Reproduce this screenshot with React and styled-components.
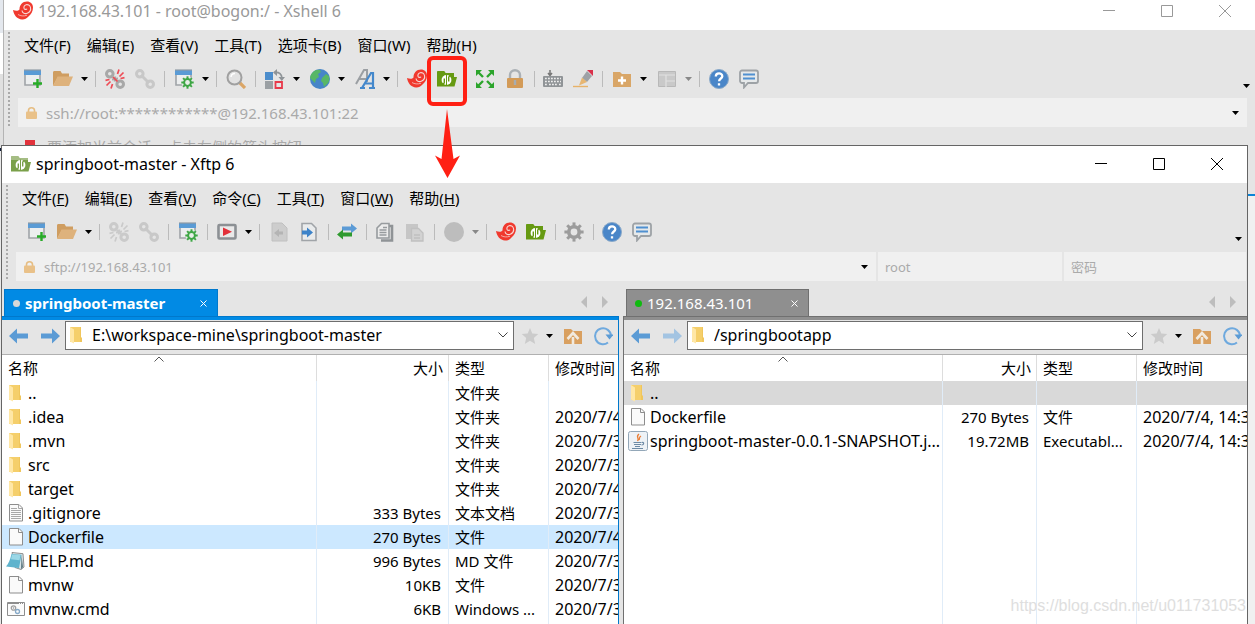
import React from "react";
import styled, { createGlobalStyle, css } from "styled-components";

const GlobalStyle = createGlobalStyle`
  * { box-sizing: border-box; }
  body {
    margin: 0;
    background: #e5e5e5;
    color: #000;
    font: 15px/20px "Noto Sans", "Noto Sans CJK SC", sans-serif;
  }
  button, input {
    margin: 0;
    padding: 0;
    border: 0;
    background: none;
    color: inherit;
    font: inherit;
  }
  svg { display: block; flex: none; }
`;

/* ---------- desktop and windows ---------- */

const Desktop = styled.div`
  position: relative;
  display: flex;
  min-height: 100vh;
  overflow: hidden;
`;

const EdgeLeft = styled.div`
  flex: none;
  width: 3px;
  background: linear-gradient(#e4e8ee 0 33px, #fff 33px 74px, #e0e0e0 74px 148px, #101c38 148px 151px, #e9e9e9 151px);
`;

const EdgeRight = styled.div`
  position: absolute;
  top: 194px;
  right: 0;
  bottom: 0;
  width: 7px;
  border-top: 2px solid #0a84d8;
  background: #f0f0f0;
`;

const ShellWindow = styled.section`
  flex: 1;
  min-width: 0;
  border-left: 1px solid #b4b4b4;
  background: #e5e5e5;
`;

const FtpWindow = styled.section`
  position: absolute;
  top: 145px;
  right: 7px;
  bottom: 0;
  left: 1px;
  display: flex;
  flex-direction: column;
  border: 1px solid #656565;
  border-bottom: 0;
  background: #e5e5e5;
`;

const TitleBar = styled.header`
  display: flex;
  flex: none;
  align-items: center;
  gap: 5px;
  height: ${(p) => (p.$inactive ? 30 : 37)}px;
  padding: ${(p) => (p.$inactive ? "0 1px 8px 9px" : "0 1px 2px 9px")};
  background: #fff;
  color: ${(p) => (p.$inactive ? "#999" : "#000")};
`;

const Title = styled.h1`
  flex: 1;
  margin: 0;
  font-size: 16px;
  font-weight: 400;
  white-space: nowrap;
`;

const WindowButtons = styled.div`
  display: flex;
`;

const WindowButton = styled.button`
  display: flex;
  justify-content: center;
  width: 58px;
`;

/* ---------- menus and toolbars ---------- */

const Bars = styled.div`
  display: flex;
  flex: none;
  flex-direction: column;
  padding-left: 14px;
  position: relative;

  &::before {
    content: "";
    position: absolute;
    top: 2px;
    bottom: 0;
    left: 4px;
    width: 2px;
    background: repeating-linear-gradient(#aaa 0 2px, transparent 2px 4px);
  }
`;

const MenuBar = styled.nav`
  display: flex;
  gap: 16px;
  height: 32px;
  align-items: center;
  padding: 0 0 2px 6px;
`;

const MenuItem = styled.button`
  white-space: nowrap;
`;

const Toolbar = styled.div`
  display: flex;
  align-items: center;
  height: 34px;
  padding-left: ${(p) => p.$inset || 0}px;
`;

const ToolButton = styled.button`
  display: flex;
  flex: none;
  align-items: center;
  justify-content: center;
  width: 30px;
  height: 30px;
`;

const CaretButton = styled.button`
  display: flex;
  flex: none;
  align-items: center;
  justify-content: center;
  width: 13px;
  height: 30px;
  color: ${(p) => (p.$dim ? "#888" : "#000")};

  & + ${ToolButton} { margin-left: 2px; }
`;

const Overflow = styled(CaretButton)`
  align-self: flex-end;
  height: 20px;
  margin: 0 2px 0 auto;
`;

const Separator = styled.span`
  flex: none;
  width: ${(p) => (p.$slim ? 8 : 9)}px;
  height: 16px;
  background: linear-gradient(#bbb, #bbb) 4px 0 / 1px 100% no-repeat;
`;

const AddressRow = styled.div`
  display: flex;
  gap: 2px;
  margin-top: ${(p) => p.$top}px;
  padding-right: ${(p) => p.$right || 0}px;
`;

const AddressField = styled.label`
  display: flex;
  flex: ${(p) => (p.$width ? "none" : "1")};
  align-items: center;
  gap: 9px;
  min-width: 0;
  width: ${(p) => (p.$width ? `${p.$width}px` : "auto")};
  height: 29px;
  padding: 0 5px 0 ${(p) => (p.$width ? 7 : 8)}px;
  background: #f0f0f0;
  color: #aaa;
  font-size: ${(p) => (p.$small ? 13 : 15)}px;
`;

const AddressInput = styled.input`
  flex: 1;
  min-width: 0;
  width: 0;
  height: 24px;
  outline: none;

  &::placeholder { color: #aaa; opacity: 1; }
`;

const Hint = styled.p`
  display: flex;
  align-items: center;
  gap: 10px;
  margin: 0;
  padding: 10px 0 0 21px;
  color: #aaa;
`;

/* ---------- file panels ---------- */

const Panels = styled.main`
  display: grid;
  flex: 1;
  grid-template-columns: minmax(0, 617fr) minmax(0, 624fr);
  gap: 4px;
  min-height: 0;
`;

const Panel = styled.section`
  display: flex;
  flex-direction: column;
  min-height: 0;
`;

const TabStrip = styled.div`
  display: flex;
  flex: none;
  align-items: flex-end;
  height: 35px;
  padding-left: ${(p) => (p.$active ? 2 : 3)}px;
`;

const Tab = styled.div`
  display: flex;
  align-items: center;
  gap: 5px;
  width: ${(p) => (p.$active ? 214 : 183)}px;
  height: 27px;
  padding: 0 4px 0 8px;
  border: 1px solid ${(p) => (p.$active ? "#0078cc" : "#707070")};
  border-bottom: 0;
  background: ${(p) => (p.$active ? "#018ae4" : "#8f8f8f")};
  color: #fff;
  font-weight: ${(p) => (p.$active ? 700 : 400)};
`;

const Dot = styled.span`
  width: 7px;
  height: 7px;
  border-radius: 50%;
  background: ${(p) => (p.$active ? "#d8d8d8" : "#0fbb0f")};
`;

const TabLabel = styled.span`
  flex: 1;
  white-space: nowrap;
`;

const TabArrows = styled.div`
  display: flex;
  align-items: center;
  gap: 1px;
  height: 28px;
  margin-left: auto;
  padding-right: 4px;
`;

const ArrowButton = styled.button`
  display: flex;
  justify-content: center;
  width: 20px;
`;

const PanelBody = styled.div`
  display: flex;
  flex: 1;
  flex-direction: column;
  min-height: 0;
  border-top: 1px solid ${(p) => (p.$active ? "#0078cc" : "#707070")};
  ${(p) =>
    p.$active
      ? css`border-right: 1px solid #0078cc;`
      : css`border-left: 1px solid #707070;`}

  &::before {
    content: "";
    flex: none;
    height: 3px;
    background: ${(p) => (p.$active ? "#018ae4" : "#8f8f8f")};
  }
`;

const PathBar = styled.div`
  display: flex;
  flex: none;
  align-items: center;
  height: 35px;
  padding: 0 0 3px 1px;
  border-bottom: 1px solid #b0b0b0;
`;

const NavButton = styled(ToolButton)`
  width: 31px;
`;

const PathField = styled.label`
  display: flex;
  flex: 1;
  align-items: center;
  gap: 5px;
  min-width: 0;
  height: 29px;
  margin-right: 1px;
  padding: 0 5px 2px 1px;
  border: 1px solid #6e6e6e;
  background: #fff;
  font-size: 16px;
`;

const StarCaret = styled(CaretButton)`
  width: 8px;

  & + ${ToolButton} { margin-left: 5px; }
`;

const List = styled.div`
  flex: 1;
  min-height: 0;
  overflow: hidden;
  background: #fff;
`;

const FileTable = styled.table`
  width: 100%;
  height: 100%;
  table-layout: fixed;
  border-collapse: separate;
  border-spacing: 0;
`;

const Heading = styled.th`
  position: relative;
  height: 26px;
  padding: 0 5px 0 6px;
  border-right: 1px solid #ddd;
  font-weight: 400;
  text-align: ${(p) => (p.$right ? "right" : "left")};
  white-space: nowrap;
  overflow: hidden;

  &:last-child { border-right: 0; padding-right: 0; }
`;

const SortMark = styled.span`
  position: absolute;
  top: 1px;
  left: 50%;
  margin-left: -5px;
`;

const Row = styled.tr`
  background: ${(p) => p.$tone || "transparent"};
`;

const Cell = styled.td`
  height: ${(p) => (p.$fill ? "auto" : "24px")};
  padding: 0 7px 0 6px;
  border-right: 1px solid #e0ecf8;
  font-size: ${(p) => (p.$large ? 16 : 15)}px;
  text-align: ${(p) => (p.$right ? "right" : "left")};
  white-space: nowrap;
  overflow: hidden;

  &:last-child { border-right: 0; padding-right: 0; }
`;

const NameCell = styled(Cell)`
  padding: 0 0 0 4px;
`;

const FileName = styled.div`
  display: flex;
  align-items: center;
  gap: 2px;
`;

/* ---------- annotations ---------- */

const HighlightBox = styled.div`
  position: absolute;
  top: 56px;
  left: 427px;
  width: 40px;
  height: 50px;
  border: 4px solid #ff2014;
  border-radius: 6px;
`;

const PointerArrow = styled.svg`
  position: absolute;
  top: 109px;
  left: 435px;
`;

const Watermark = styled.span`
  position: absolute;
  right: 9px;
  bottom: 8px;
  color: #dedede;
  font: 16px/20px "Liberation Sans", sans-serif;
  pointer-events: none;
`;

/* ---------- icons ---------- */

const Svg = ({ w = 20, h = 20, children, ...rest }) => (
  <svg width={w} height={h} viewBox={`0 0 ${w} ${h}`} fill="none" aria-hidden="true" {...rest}>
    {children}
  </svg>
);

const Caret = () => (
  <Svg w={7} h={4}><path d="M0 0h7L3.5 4z" fill="currentColor" /></Svg>
);

const Gear = ({ cx, cy, r, thick, w, l, color }) => (
  <g>
    <circle cx={cx} cy={cy} r={r - thick / 2} stroke={color} strokeWidth={thick} />
    {[0, 45, 90, 135, 180, 225, 270, 315].map((a) => (
      <rect key={a} x={cx - w / 2} y={cy - r - l} width={w} height={l + 1} fill={color} transform={`rotate(${a} ${cx} ${cy})`} />
    ))}
  </g>
);

const SessionFrame = () => (
  <>
    <path d="M2 4v12h15V4" stroke="#a0a4a8" strokeWidth="1.6" fill="#eceeef" />
    <path d="M1 1h17v5H1z" fill="#5a9bd5" />
    <path d="M1 1h17" stroke="#8f9aa4" strokeWidth="1.2" />
  </>
);

const ChainLink = ({ color, broken, spark }) => (
  <>
    <g stroke={color} strokeWidth="3">
      <circle cx="4.8" cy="4.8" r="3.3" />
      <circle cx="15.200" cy="15.200" r="3.3" />
      {!broken && <path d="M6 6l8 8" />}
      {broken && <path d="M7 10.500c2 0 3-.5 3.500-3M13 9.500c-2 0-3 .5-3.500 3" strokeWidth="1.800" />}
    </g>
    {broken && (
      <path
        d="M8 8l4.500 4.500M12.500 5l1.500-4.500M14.500 7.500l4-4M15.500 9.500l4-.8M7.500 15L6 19.500M5.500 12.500l-4 4M4.500 10.500l-4 .8"
        stroke={spark}
        strokeWidth="1.700"
      />
    )}
  </>
);

const FtpFolder = ({ top, body }) => (
  <>
    <path d="M0 3.500C0 2.700.5 2 1.500 2H7l1.500 2H17v4h3l-2.500 9.500H0z" fill={body} />
    <path d="M0 3.500C0 2.700.5 2 1.500 2H7l1.500 2H17v2H0z" fill={top} />
    <circle cx="9.500" cy="11" r="4.900" fill="#fff" />
    <path d="M9.500 5.500v11" stroke={body} strokeWidth="1" />
    <path d="M7.300 9.500v4.500l-2 1.500M11.700 12.500V8l2-1.500" stroke={body} strokeWidth="1.400" />
  </>
);

const icons = {
  newSession: (
    <Svg><SessionFrame /><path d="M14.500 10v9M10 14.500h9" stroke="#27ab27" strokeWidth="2.400" /></Svg>
  ),
  folder: (
    <Svg>
      <path d="M0 17V3.500C0 2.700.5 2 1.500 2h6L9 4.500h7V8H5z" fill="#cf9d60" />
      <path d="M0 17L4.500 7.500H20L16 17z" fill="#deb27c" />
    </Svg>
  ),
  disconnect: <Svg><ChainLink color="#a8a8a8" broken spark="#ee4b55" /></Svg>,
  disconnectDim: <Svg><ChainLink color="#cacaca" broken spark="#cacaca" /></Svg>,
  link: <Svg><ChainLink color="#c8c8c8" /></Svg>,
  settings: (
    <Svg>
      <SessionFrame />
      <circle cx="13.500" cy="13.500" r="6" fill="#e9eee9" />
      <Gear cx={13.5} cy={13.5} r={4.4} thick={2} w={2} l={1.8} color="#3fa646" />
    </Svg>
  ),
  search: (
    <Svg>
      <path d="M13 13l6 6" stroke="#dba667" strokeWidth="3.200" />
      <circle cx="8.500" cy="8.500" r="7" stroke="#a0a0a0" strokeWidth="2" fill="#e2e2e2" />
      <path d="M5 8a4 4 0 014-3.500" stroke="#fff" strokeWidth="1.500" />
    </Svg>
  ),
  arrange: (
    <Svg>
      <path d="M0 3h8v8H0z" fill="#4c8dcc" />
      <path d="M0 12h8v8H0z" fill="#9ba0a4" />
      <path d="M10.500 13h6.500v6h-6.500z" stroke="#e8394a" strokeWidth="1.800" />
      <path d="M10 3.500c4-.5 7 1.500 7 6" stroke="#8f9498" strokeWidth="1.800" />
      <path d="M12 0v7L8 3.500zM13.500 8h6.500l-3.200 4z" fill="#8f9498" />
    </Svg>
  ),
  globe: (
    <Svg>
      <circle cx="10" cy="10" r="10" fill="#4685c8" />
      <path d="M3 3c2-2 5-2.500 7-2l1 2-3 2 1 3-3 2-1 4-3-3-2-2c0-2 1-4 3-6zM12 9l4-4 3 2c1 4 0 7-3 9l-2 2-1-4-2-2z" fill="#57b766" />
    </Svg>
  ),
  font: (
    <Svg>
      <path d="M1 15L9 1h3v12M4 10h7" stroke="#9b9fa3" strokeWidth="2" />
      <path d="M7 19L16 4h2v15M10 14.500h7M14 19h6M5 19h5" stroke="#4488cc" strokeWidth="2.200" />
    </Svg>
  ),
  shell: (
    <Svg>
      <path d="M0 9c3 1.300 5.300 1 6.500-.5C6.500 4 9.500.5 14 .5c3.500 0 6 2.500 6 6 0 4-2 7-4.500 9-2 2.300-4 3.200-6.500 3C4 18 1 14.500 0 9z" fill="#f0392e" />
      <path d="M9 9.500c.3 2.800 3 3.700 5.300 2.700 2.500-1 3.700-3.400 3.200-5.700-.5-2.200-2.700-3.300-4.500-2.700-1.700.5-2.500 2.300-1.900 3.600.6 1.200 2.300 1.300 2.900.4" stroke="#f7d9d6" strokeWidth="1.100" />
      <path d="M5 13.500c2.500 1.500 5.500 2 9 .7" stroke="#f7d9d6" strokeWidth=".7" />
    </Svg>
  ),
  ftp: <Svg><FtpFolder top="#669a12" body="#669a12" /></Svg>,
  ftpSmall: <Svg><FtpFolder top="#a5bd84" body="#7aa04a" /></Svg>,
  expand: (
    <Svg fill="#2ca52c" stroke="#2ca52c">
      <path d="M1 1h6L1 7zM19 1v6l-6-6zM1 19v-6l6 6zM19 19h-6l6-6z" stroke="none" />
      <path d="M3 3l5 5M17 3l-5 5M3 17l5-5M17 17l-5-5" strokeWidth="2.400" />
    </Svg>
  ),
  padlock: (
    <Svg>
      <path d="M5 10V6a5 4.800 0 0110 0v4" stroke="#aab0b5" strokeWidth="2.400" />
      <rect x="2" y="9" width="16" height="10" rx="1" fill="#d39b58" />
      <path d="M10 11v5" stroke="#a8adb0" strokeWidth="2.400" />
    </Svg>
  ),
  keyboard: (
    <Svg>
      <path d="M7 1v6M5 4l2 2.500L9 4" stroke="#777" strokeWidth="1.500" />
      <rect x="0" y="7" width="20" height="11" rx="1" fill="#909497" />
      <path d="M2 9.500h16M2 12.500h16M2 15.500h2m2 0h8m2 0h2" stroke="#eee" strokeWidth="1.400" strokeDasharray="1.800 1.200" />
    </Svg>
  ),
  pen: (
    <Svg>
      <path d="M14 1h6v6z" fill="#d9304a" />
      <path d="M14 2l5 5-5 6-5-4z" fill="#9da1a6" />
      <path d="M9 8.500l5 4.500-8 3.500z" fill="#e7b672" />
      <path d="M0 17.500h15" stroke="#e7b268" strokeWidth="1.400" />
    </Svg>
  ),
  folderAdd: (
    <Svg>
      <path d="M1 3h7l2 2h9v13H1z" fill="#d9a667" />
      <path d="M10 7.500v8M6 11.500h8" stroke="#fff" strokeWidth="2.400" />
    </Svg>
  ),
  layout: (
    <Svg>
      <path d="M1.500 2.500h17v15h-17z" fill="#c9c9c9" stroke="#b8b8b8" />
      <path d="M2 6h16M9 6v12M9 12h9" stroke="#e2e2e2" strokeWidth="1.200" />
    </Svg>
  ),
  help: (
    <Svg>
      <circle cx="10" cy="10" r="9.500" fill="#4a86c8" stroke="#8aa9c8" />
      <path d="M6.800 7.500c0-4 6.500-4 6.500-.3 0 2.300-3.200 2.300-3.200 5M10 14.200v2.400" stroke="#fff" strokeWidth="2.300" />
    </Svg>
  ),
  chat: (
    <Svg>
      <path d="M3 1.500h14c1 0 2 1 2 2V12c0 1-1 2-2 2H9l-4 4.500V14H3c-1 0-2-1-2-2V3.500c0-1 1-2 2-2z" stroke="#9da2a6" strokeWidth="1.800" fill="#e6e9ea" />
      <path d="M4 5.500h12M4 9.500h12" stroke="#4f90d0" strokeWidth="2" />
    </Svg>
  ),
  play: (
    <Svg>
      <rect x="1.500" y="3" width="17" height="13.500" rx="1" stroke="#8c9094" strokeWidth="2.600" fill="#e9e9e9" />
      <path d="M6 5.500l9 4.200-9 4.200z" fill="#e2303a" />
    </Svg>
  ),
  pageBack: (
    <Svg>
      <path d="M3 1h10l5 5v13H3z" fill="#cdcdcd" stroke="#c0c0c0" />
      <path d="M14 9.500h-4V7l-5 4 5 4v-2.500h4z" fill="#b4b4b4" />
    </Svg>
  ),
  pageForward: (
    <Svg>
      <path d="M3 1.500h9.500L17 6v12.500H3z" fill="#e9ebec" stroke="#a0a4a8" strokeWidth="1.600" />
      <path d="M3 8.500h5V5.500l6 5-6 5v-3H3z" fill="#3d83c9" />
    </Svg>
  ),
  transfer: (
    <Svg>
      <path d="M5 4.500h9V1.500l6 5-6 5V8.500H5z" fill="#5c9bd6" />
      <path d="M15 10.500H6V7.500l-6 5 6 5V14.500h9z" fill="#2f9a2f" />
    </Svg>
  ),
  copy: (
    <Svg>
      <path d="M8 4h9v14.500H6" stroke="#8f9396" strokeWidth="2.600" />
      <path d="M2 6l4.500-4.500H14V16H2z" fill="#ebebeb" stroke="#979b9e" strokeWidth="1.600" />
      <path d="M4.500 8h7M4.500 10.500h7M4.500 13h7M8 5.500h4" stroke="#979b9e" strokeWidth="1.300" />
    </Svg>
  ),
  paste: (
    <Svg>
      <path d="M1 2h12v15H1z" fill="#c6c6c6" />
      <path d="M6.500 6.500h7L18 11v8H6.500z" fill="#d2d2d2" stroke="#c0c0c0" strokeWidth="1.300" />
      <path d="M9 13h6M9 16h6" stroke="#c0c0c0" strokeWidth="1.300" />
    </Svg>
  ),
  disc: <Svg><circle cx="10" cy="10" r="10" fill="#bdbdbd" /></Svg>,
  gear: <Svg><Gear cx={10} cy={10} r={7} thick={3.6} w={3} l={2.6} color="#9c9c9c" /></Svg>,
  back: <Svg><path d="M0 10l8-7.500v5h11v5H8v5z" fill="#5b9bd5" /></Svg>,
  forward: <Svg><path d="M20 10l-8-7.500v5H1v5h11v5z" fill="#5b9bd5" /></Svg>,
  forwardDim: <Svg><path d="M20 10l-8-7.500v5H1v5h11v5z" fill="#a3c4e2" /></Svg>,
  star: <Svg><path d="M10 2l2.300 5.500 6 .5-4.500 4 1.400 6-5.200-3.200L4.800 18l1.400-6-4.500-4 6-.5z" fill="#cbcbcb" /></Svg>,
  folderUp: (
    <Svg>
      <path d="M1 3h7l2 2h9v13H1z" fill="#d9a060" />
      <path d="M10 19v-8M4.500 13L10 7l5.500 6" stroke="#f1eadf" strokeWidth="2.600" />
    </Svg>
  ),
  refresh: (
    <Svg>
      <path d="M15 16.500A8 8 0 1118 10" stroke="#6ea9de" strokeWidth="2" />
      <path d="M12.500 8.500H20.500L16.500 13.500z" fill="#5b9bd5" />
    </Svg>
  ),
  minimize: <Svg w={12} h={12}><path d="M0 5.500h12" stroke="currentColor" /></Svg>,
  maximize: <Svg w={12} h={12}><path d="M.5.5h11v11H.5z" stroke="currentColor" /></Svg>,
  close: <Svg w={12} h={12}><path d="M0 0l12 12M12 0L0 12" stroke="currentColor" /></Svg>,
  tabClose: <Svg w={7} h={7}><path d="M.5.5l6 6M6.500.5l-6 6" stroke="#fff" /></Svg>,
  chevron: <Svg w={10} h={6}><path d="M.5.5L5 5 9.500.5" stroke="#444" /></Svg>,
  sort: <Svg w={10} h={6}><path d="M.5 5.500L5 1l4.500 4.500" stroke="#555" /></Svg>,
  smallLock: (
    <Svg w={11} h={12}>
      <path d="M2.500 5V3.500a3 2.700 0 016 0V5" stroke="#e6bd82" strokeWidth="1.600" />
      <rect y="4.500" width="11" height="7.500" rx="1" fill="#e9c189" />
    </Svg>
  ),
  dir: (
    <Svg>
      <path d="M3 2h10v15H3z" fill="#f5cf6b" />
      <path d="M13 2h1v10l1 1v4h-2z" fill="#f0c65c" />
      <path d="M3 2l4 2.500V18.500L3 16.500z" fill="#ffe7a6" />
    </Svg>
  ),
  file: (
    <Svg>
      <path d="M3.500 1.500h9.500l3.500 3.500v13h-13z" fill="#fafafa" stroke="#8d8d8d" />
      <path d="M12.500 1.500v4h4" stroke="#8d8d8d" />
    </Svg>
  ),
  text: (
    <Svg>
      <path d="M3.500 1.500h9.500l3.500 3.500v13h-13z" fill="#fafafa" stroke="#8d8d8d" />
      <path d="M12.500 1.500v4h4M5 5.500h6M5 7.500h10M5 9.500h10M5 11.500h10M5 13.500h10M5 15.500h10" stroke="#a8a8a8" />
    </Svg>
  ),
  notepad: (
    <Svg>
      <path d="M6 1.500l11 1.200 1 13.300-3 2.500-6-2z" fill="#d8e4e8" stroke="#777" strokeWidth=".8" />
      <path d="M5.500 3l10 .8-2.500 13.200L0 15.500C2.500 13 4 9 5.500 3z" fill="#5fb3cd" />
      <path d="M6 3.500l8.500.7-1 5-8.500-1z" fill="#9ad7e6" />
      <path d="M15.500 4l1.500 12-2 2.500z" fill="#5d7880" />
    </Svg>
  ),
  cmd: (
    <Svg>
      <path d="M1.500 3.500h17v13h-17z" fill="#fbfbfb" stroke="#8d8d8d" />
      <path d="M2 4.500h15" stroke="#8d8d8d" strokeDasharray="11 1 1 1" />
      <circle cx="7.500" cy="9" r="2.200" stroke="#a0a0a0" strokeWidth="1.300" />
      <circle cx="11.500" cy="12.500" r="2" stroke="#86a9c8" strokeWidth="1.300" />
      <circle cx="7.500" cy="9" r=".7" fill="#909090" />
    </Svg>
  ),
  jar: (
    <Svg>
      <rect x=".5" y=".5" width="19" height="19" rx="2" fill="#eef2f6" stroke="#93a7b8" />
      <path d="M11 3c-4 3 1 4-1.500 7M13 5c-2.500 1.500-1 2.500-2 4" stroke="#ea7d35" strokeWidth="1.300" />
      <path d="M5.500 11.500h8M6 13.500h7M7 15.500h5M14 11.500c2-.5 2.500 2-.5 2.500M4 17.500h11" stroke="#6d8ba6" strokeWidth="1.200" />
    </Svg>
  ),
};

/* ---------- data ---------- */

const shellMenu = [["文件", "F"], ["编辑", "E"], ["查看", "V"], ["工具", "T"], ["选项卡", "B"], ["窗口", "W"], ["帮助", "H"]];
const ftpMenu = [["文件", "F"], ["编辑", "E"], ["查看", "V"], ["命令", "C"], ["工具", "T"], ["窗口", "W"], ["帮助", "H"]];

/* "|" is a separator, "!" a narrow one, "v" a drop-down caret, "x" a disabled caret */
const shellTools = "newSession folder v | disconnect link | settings v | search | arrange v globe v font v | shell ftp ! expand padlock ! keyboard pen | folderAdd v layout x | help chat".split(" ");
const ftpTools = "newSession folder v | disconnectDim link | settings | play v | pageBack pageForward ! transfer ! copy paste | disc x | shell ftp ! gear ! help chat".split(" ");

const localFiles = [
  ["dir", "..", "", "文件夹", ""],
  ["dir", ".idea", "", "文件夹", "2020/7/4"],
  ["dir", ".mvn", "", "文件夹", "2020/7/3"],
  ["dir", "src", "", "文件夹", "2020/7/3"],
  ["dir", "target", "", "文件夹", "2020/7/4"],
  ["text", ".gitignore", "333 Bytes", "文本文档", "2020/7/3"],
  ["file", "Dockerfile", "270 Bytes", "文件", "2020/7/4", "#cce8ff"],
  ["notepad", "HELP.md", "996 Bytes", "MD 文件", "2020/7/3"],
  ["file", "mvnw", "10KB", "文件", "2020/7/3"],
  ["cmd", "mvnw.cmd", "6KB", "Windows ...", "2020/7/3"],
];

const remoteFiles = [
  ["dir", "..", "", "", "", "#d9d9d9"],
  ["file", "Dockerfile", "270 Bytes", "文件", "2020/7/4, 14:3"],
  ["jar", "springboot-master-0.0.1-SNAPSHOT.j...", "19.72MB", "Executabl...", "2020/7/4, 14:3"],
];

/* ---------- parts ---------- */

const Tools = ({ items, inset }) => (
  <Toolbar $inset={inset}>
    {items.map((t, i) => {
      if (t === "|" || t === "!") return <Separator key={i} $slim={t === "!"} />;
      if (t === "v" || t === "x")
        return <CaretButton key={i} $dim={t === "x"} aria-label="more"><Caret /></CaretButton>;
      return <ToolButton key={i} aria-label={t}>{icons[t]}</ToolButton>;
    })}
    <Overflow aria-label="options"><Caret /></Overflow>
  </Toolbar>
);

const Controls = () => (
  <WindowButtons>
    {["minimize", "maximize", "close"].map((n) => (
      <WindowButton key={n} aria-label={n}>{icons[n]}</WindowButton>
    ))}
  </WindowButtons>
);

const FilePanel = ({ active, tab, path, files, sizes }) => (
  <Panel>
    <TabStrip $active={active}>
      <Tab $active={active}>
        <Dot $active={active} />
        <TabLabel>{tab}</TabLabel>
        <ArrowButton aria-label="close tab">{icons.tabClose}</ArrowButton>
      </Tab>
      <TabArrows>
        <ArrowButton aria-label="previous tab"><Svg w={6} h={12}><path d="M6 0v12L0 6z" fill="#bdbdbd" /></Svg></ArrowButton>
        <ArrowButton aria-label="next tab"><Svg w={6} h={12}><path d="M0 0v12l6-6z" fill="#bdbdbd" /></Svg></ArrowButton>
      </TabArrows>
    </TabStrip>
    <PanelBody $active={active}>
      <PathBar>
        <NavButton aria-label="back">{icons.back}</NavButton>
        <NavButton aria-label="forward">{active ? icons.forward : icons.forwardDim}</NavButton>
        <PathField>
          {icons.dir}
          <AddressInput aria-label="path" defaultValue={path} />
          {icons.chevron}
        </PathField>
        <ToolButton aria-label="favourite">{icons.star}</ToolButton>
        <StarCaret aria-label="favourites"><Caret /></StarCaret>
        <ToolButton aria-label="parent folder">{icons.folderUp}</ToolButton>
        <ToolButton aria-label="refresh">{icons.refresh}</ToolButton>
      </PathBar>
      <List>
        <FileTable>
          <colgroup>
            <col />
            {sizes.map((w, i) => <col key={i} width={w} />)}
          </colgroup>
          <thead>
            <tr>
              <Heading>名称<SortMark>{icons.sort}</SortMark></Heading>
              <Heading $right>大小</Heading>
              <Heading>类型</Heading>
              <Heading>修改时间</Heading>
            </tr>
          </thead>
          <tbody>
            {files.map(([icon, name, size, type, date, tone]) => (
              <Row key={name} $tone={tone}>
                <NameCell $large><FileName>{icons[icon]}<span>{name}</span></FileName></NameCell>
                <Cell $right>{size}</Cell>
                <Cell>{type}</Cell>
                <Cell $large>{date}</Cell>
              </Row>
            ))}
            <Row><Cell $fill /><Cell $fill /><Cell $fill /><Cell $fill /></Row>
          </tbody>
        </FileTable>
      </List>
    </PanelBody>
  </Panel>
);

export default function App() {
  return (
    <Desktop>
      <GlobalStyle />
      <EdgeLeft />
      <ShellWindow>
        <TitleBar $inactive>
          {icons.shell}
          <Title>192.168.43.101 - root@bogon:/ - Xshell 6</Title>
          <Controls />
        </TitleBar>
        <Bars>
          <MenuBar>
            {shellMenu.map(([label, key]) => <MenuItem key={key}>{label}({key})</MenuItem>)}
          </MenuBar>
          <Tools items={shellTools} />
          <AddressRow $top={2} $right={8}>
            <AddressField>
              {icons.smallLock}
              <AddressInput aria-label="address" defaultValue="ssh://root:************@192.168.43.101:22" />
              <CaretButton aria-label="history"><Caret /></CaretButton>
            </AddressField>
          </AddressRow>
        </Bars>
        <Hint>
          <Svg w={12} h={14}><path d="M0 0h10v14H0z" fill="#e2323c" /><path d="M9 5l3 4v3H9z" fill="#3c62c8" /></Svg>
          要添加当前会话，点击左侧的箭头按钮。
        </Hint>
      </ShellWindow>
      <EdgeRight />
      <FtpWindow>
        <TitleBar>
          {icons.ftpSmall}
          <Title>springboot-master - Xftp 6</Title>
          <Controls />
        </TitleBar>
        <Bars>
          <MenuBar>
            {ftpMenu.map(([label, key]) => <MenuItem key={key}>{label}(<u>{key}</u>)</MenuItem>)}
          </MenuBar>
          <Tools items={ftpTools} inset={6} />
          <AddressRow $top={3} $right={1}>
            <AddressField $small>
              {icons.smallLock}
              <AddressInput aria-label="server" defaultValue="sftp://192.168.43.101" />
              <CaretButton aria-label="history"><Caret /></CaretButton>
            </AddressField>
            <AddressField $small $width={184}><AddressInput aria-label="user" placeholder="root" /></AddressField>
            <AddressField $small $width={182}><AddressInput aria-label="password" placeholder="密码" /></AddressField>
          </AddressRow>
        </Bars>
        <Panels>
          <FilePanel active tab="springboot-master" path="E:\workspace-mine\springboot-master" files={localFiles} sizes={[132, 100, 69]} />
          <FilePanel tab="192.168.43.101" path="/springbootapp" files={remoteFiles} sizes={[94, 100, 110]} />
        </Panels>
      </FtpWindow>
      <HighlightBox />
      <PointerArrow width="25" height="70" viewBox="0 0 25 70" aria-hidden="true">
        <path d="M12 0l6.500 50 6.500-3.500L12.500 69 0 46.500 6.500 50z" fill="#ff2014" />
      </PointerArrow>
      <Watermark>https://blog.csdn.net/u011731053</Watermark>
    </Desktop>
  );
}
